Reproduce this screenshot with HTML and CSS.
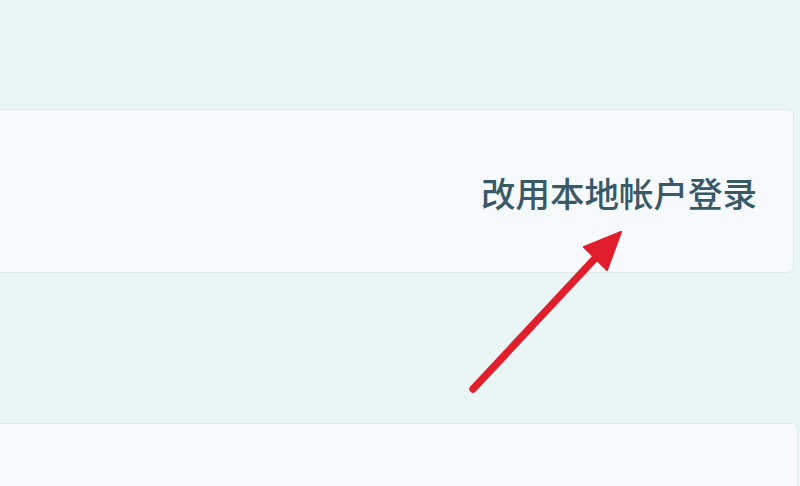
FILE: index.html
```html
<!DOCTYPE html>
<html lang="zh-CN">
<head>
<meta charset="utf-8">
<link rel="stylesheet" href="styles.css">
</head>
<body>
<div class="page">
  <div class="card card-top">
    <span class="link">改用本地帐户登录</span>
  </div>
  <div class="card card-bottom"></div>
</div>
<svg class="arrow" width="800" height="486" viewBox="0 0 800 486">
  <line x1="473" y1="389" x2="601" y2="252" stroke="#e01e2c" stroke-width="7.5" stroke-linecap="round"/>
  <polygon points="621,232 584,247 607,270" fill="#e01e2c" stroke="#e01e2c" stroke-width="2" stroke-linejoin="round"/>
</svg>
</body>
</html>
```
FILE: styles.css
```css
html, body {
  margin: 0;
  padding: 0;
}
body {
  width: 800px;
  height: 486px;
  overflow: hidden;
  background: #eaf5f6;
  font-family: "Noto Sans CJK SC", "Noto Sans", sans-serif;
  position: relative;
}
.page {
  display: flex;
  flex-direction: column;
  gap: 150px;
  padding: 109px 5px 0 0;
}
.card {
  background: #f7fafc;
  border: 1px solid #dfe9eb;
  border-left: none;
  border-radius: 0 6px 6px 0;
  box-sizing: border-box;
}
.card-top {
  height: 164px;
  margin-right: 1px;
  display: flex;
  align-items: center;
  justify-content: flex-end;
  padding: 2px 36px 0 0;
}
.card-bottom {
  height: 80px;
  margin-right: -3px;
}
.link {
  font-size: 34.5px;
  font-weight: 500;
  line-height: 1;
  color: #3a5966;
}
.arrow {
  position: absolute;
  left: 0;
  top: 0;
}
```
